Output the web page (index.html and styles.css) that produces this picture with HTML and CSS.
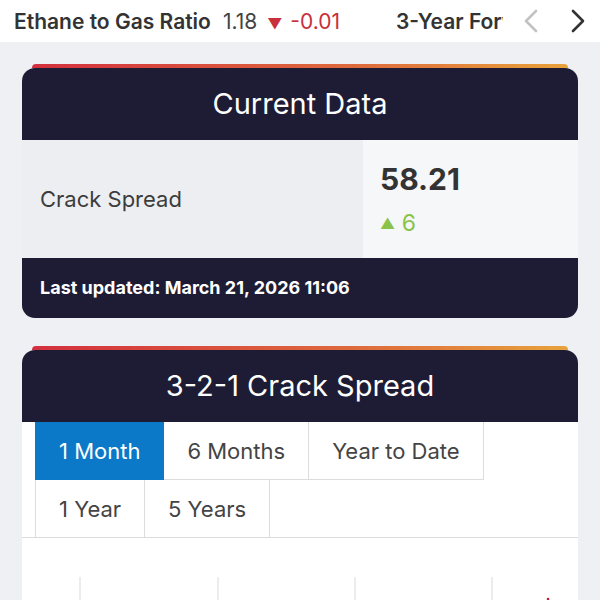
FILE: index.html
```html
<!DOCTYPE html>
<html lang="en">
  <head>
    <meta charset="UTF-8" />
    <meta name="viewport" content="width=device-width, initial-scale=1.0" />
    <title>3-2-1 Crack Spread</title>
    <link rel="stylesheet" href="styles.css">
  </head>
  <body>
    <!-- Ticker bar -->
    <div class="ticker">
      <div class="ticker-track">
        <div class="ticker-item">
          <span class="ticker-name">Ethane to Gas Ratio</span>
          <span class="ticker-value">1.18</span>
          <span class="ticker-change down"><span class="arrow">&#9660;</span> -0.01</span>
        </div>
        <div class="ticker-item">
          <span class="ticker-name">3-Year Forward Curve</span>
        </div>
      </div>
      <div class="ticker-nav">
        <svg class="chevron light" width="16" height="24" viewBox="0 0 16 24"><polyline points="13,2 3,12 13,22" /></svg>
        <svg class="chevron" width="16" height="24" viewBox="0 0 16 24"><polyline points="3,2 13,12 3,22" /></svg>
      </div>
    </div>

    <main class="content">
      <!-- Current data card -->
      <section class="card">
        <div class="card-accent"></div>
        <h2 class="card-title">Current Data</h2>
        <div class="data-row">
          <div class="data-label">Crack Spread</div>
          <div class="data-values">
            <div class="data-price">58.21</div>
            <div class="data-change up"><span class="arrow">&#9650;</span> 6</div>
          </div>
        </div>
        <div class="card-footer">Last updated: March 21, 2026 11:06</div>
      </section>

      <!-- Chart card -->
      <section class="card">
        <div class="card-accent"></div>
        <h2 class="card-title">3-2-1 Crack Spread</h2>
        <div class="card-body">
          <div class="tabs">
            <button class="tab active">1 Month</button>
            <button class="tab">6 Months</button>
            <button class="tab">Year to Date</button>
            <button class="tab">1 Year</button>
            <button class="tab">5 Years</button>
          </div>
          <div class="chart">
            <svg width="556" height="260" viewBox="0 0 556 260">
              <g class="grid">
                <line x1="58" y1="39" x2="58" y2="260" />
                <line x1="196" y1="39" x2="196" y2="260" />
                <line x1="333" y1="39" x2="333" y2="260" />
                <line x1="470" y1="39" x2="470" y2="260" />
              </g>
              <polyline class="line" points="520,110 523,84 526,60 529,82 533,96" />
            </svg>
          </div>
        </div>
      </section>
    </main>
  </body>
</html>
```

FILE: styles.css
```css
/* Global Styles */
* {
  box-sizing: border-box;
}

body {
  margin: 0;
  background-color: #eef0f3;
  font-family: Inter, "Noto Sans", Arial, sans-serif;
  color: #3a3a3a;
}

/* Ticker */
.ticker {
  display: flex;
  align-items: center;
  height: 42px;
  background-color: white;
  overflow: hidden;
}

.ticker-track {
  flex: 1;
  display: flex;
  gap: 56px;
  padding-left: 14px;
  overflow: hidden;
  white-space: nowrap;
}

.ticker-item {
  display: flex;
  align-items: baseline;
  font-size: 21px;
}

.ticker-name {
  font-weight: 600;
  color: #333;
  margin-right: 12px;
}

.ticker-value {
  color: #444;
  margin-right: 10px;
}

.ticker-change.down {
  color: #c8303c;
}

.ticker-change .arrow {
  font-size: 15px;
  margin-right: 2px;
}

.ticker-nav {
  display: flex;
  align-items: center;
  gap: 31px;
  padding: 0 14px 0 20px;
  background-color: white;
}

.chevron polyline {
  fill: none;
  stroke: #333;
  stroke-width: 2.6;
  stroke-linecap: round;
  stroke-linejoin: round;
}

.chevron.light polyline {
  stroke: #c2c2c2;
}

/* Cards */
.content {
  padding: 22px;
}

.card {
  margin-bottom: 28px;
}

.card-accent {
  height: 4px;
  margin: 0 10px;
  border-radius: 4px 4px 0 0;
  background: linear-gradient(to right, #d3303d, #de6a3c 60%, #e8a23b);
}

.card-title {
  margin: 0;
  height: 72px;
  line-height: 72px;
  border-radius: 13px 13px 0 0;
  background-color: #1e1c35;
  color: white;
  text-align: center;
  font-size: 29px;
  font-weight: 400;
}

.data-row {
  display: flex;
  height: 118px;
}

.data-label {
  width: 341px;
  padding-left: 18px;
  display: flex;
  align-items: center;
  background-color: #eceef1;
  font-size: 22px;
  color: #3c3c3c;
}

.data-values {
  flex: 1;
  padding: 21px 17px 0;
  background-color: #f6f7f9;
}

.data-price {
  font-size: 30px;
  line-height: 36px;
  font-weight: 700;
  color: #333;
}

.data-change {
  margin-top: 11px;
  font-size: 23px;
  line-height: 30px;
}

.data-change.up {
  color: #8bc34a;
}

.data-change .arrow {
  font-size: 15px;
  vertical-align: 2px;
}

.card-footer {
  height: 60px;
  line-height: 60px;
  padding-left: 18px;
  border-radius: 0 0 13px 13px;
  background-color: #1e1c35;
  color: white;
  font-size: 18px;
  font-weight: 700;
}

/* Chart card */
.card-body {
  background-color: white;
}

.tabs {
  display: flex;
  flex-wrap: wrap;
  padding-left: 13px;
  border-bottom: 1px solid #dcdcdc;
}

.tab {
  height: 58px;
  padding: 0 23px;
  border: 1px solid #dcdcdc;
  border-top: 0;
  border-left: 0;
  background-color: white;
  font-family: inherit;
  font-size: 22px;
  color: #444;
}

.tab:nth-child(1),
.tab:nth-child(4) {
  border-left: 1px solid #dcdcdc;
}

.tab:nth-child(n+4) {
  height: 57px;
  border-bottom: 0;
}

.tab:nth-child(3) {
  margin-right: 90px;
}

.tab.active {
  background-color: #0b78c8;
  border-color: #0b78c8;
  color: white;
}

.chart svg {
  display: block;
}

.grid line {
  stroke: #e6e6e6;
  stroke-width: 1.5;
}

.line {
  fill: none;
  stroke: #b8203a;
  stroke-width: 2;
}
```
